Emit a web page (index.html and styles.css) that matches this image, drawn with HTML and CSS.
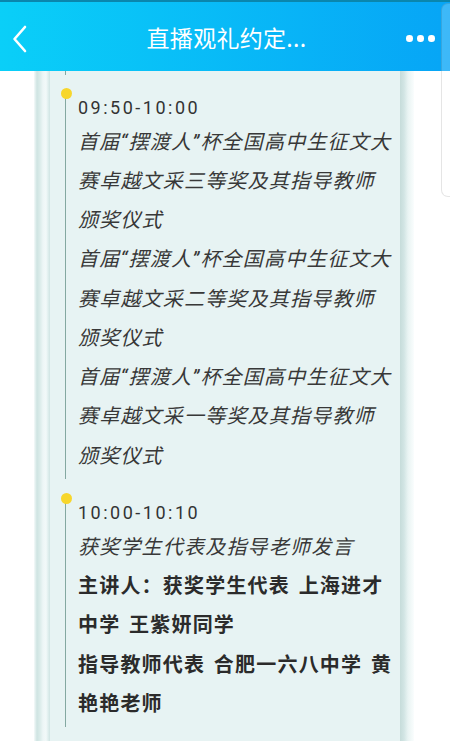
FILE: index.html
```html
<!DOCTYPE html>
<html lang="zh">
<head>
<meta charset="utf-8">
<title>直播观礼约定</title>
<link rel="stylesheet" href="styles.css">
</head>
<body>
<header class="topbar">
  <svg class="back" width="20" height="30" viewBox="0 0 20 30"><path d="M15 3 L4.5 15 L15 27" fill="none" stroke="#fff" stroke-width="2.6" stroke-linecap="round" stroke-linejoin="round"/></svg>
  <h1 class="title">直播观礼约定...</h1>
  <div class="more"><span></span><span></span><span></span></div>
</header>
<div class="side-card"></div>
<main class="page">
  <div class="frame">
    <div class="edge-left"></div>
    <section class="panel">
      <div class="tail"></div>
      <div class="item">
        <span class="dot"></span>
        <div class="time">09:50-10:00</div>
        <p class="it">首届“摆渡人”杯全国高中生征文大赛卓越文采三等奖及其指导教师颁奖仪式</p>
        <p class="it">首届“摆渡人”杯全国高中生征文大赛卓越文采二等奖及其指导教师颁奖仪式</p>
        <p class="it">首届“摆渡人”杯全国高中生征文大赛卓越文采一等奖及其指导教师颁奖仪式</p>
      </div>
      <div class="item">
        <span class="dot"></span>
        <div class="time">10:00-10:10</div>
        <p class="it">获奖学生代表及指导老师发言</p>
        <p class="bd">主讲人：获奖学生代表 上海进才中学 王紫妍同学</p>
        <p class="bd">指导教师代表 合肥一六八中学 黄艳艳老师</p>
      </div>
    </section>
    <div class="edge-right"></div>
  </div>
</main>
</body>
</html>
```
FILE: styles.css
```css
html, body {
  margin: 0;
  padding: 0;
}
body {
  width: 450px;
  height: 741px;
  overflow: hidden;
  background: #fff;
  font-family: Roboto, "Noto Sans CJK SC", sans-serif;
  color: #333;
  position: relative;
}
.topbar {
  height: 69px;
  border-top: 2px solid #0a86ad;
  background: linear-gradient(to right, #0acff8, #07a5f6);
  display: flex;
  align-items: center;
  position: relative;
}
.back {
  position: absolute;
  left: 10px;
  top: 22px;
}
.title {
  margin: 0;
  flex: 1;
  text-align: center;
  font-family: "Noto Sans CJK SC", sans-serif;
  font-weight: 400;
  font-size: 23px;
  color: #fff;
  letter-spacing: 0.3px;
  padding-left: 3px;
}
.more {
  position: absolute;
  left: 406px;
  top: 33px;
  display: flex;
  gap: 4.5px;
}
.more span {
  width: 6.5px;
  height: 6.5px;
  border-radius: 50%;
  background: #fff;
}
.side-card {
  position: absolute;
  left: 441px;
  top: 3px;
  width: 8px;
  height: 192px;
  border: 1px solid rgba(0, 0, 0, 0.1);
  border-right: none;
  border-radius: 7px 0 0 7px;
  background: rgba(255, 255, 255, 0.22);
}
.page {
  padding-left: 34px;
}
.frame {
  display: flex;
  width: 380px;
  height: 670px;
}
.edge-left {
  width: 16px;
  background: linear-gradient(to right, #f5fafa 0, #cfe4e2 3px, #dbecea 6px, #edf6f6 9px, #f2f9f9 12px, #d8eae9 15px, #d0e4e3 16px);
}
.edge-right {
  width: 14px;
  background: linear-gradient(to right, #c6dcda 0, #d2e5e4 4px, #e9f4f3 8px, #fafdfd 14px);
}
.panel {
  flex: 1;
  background: #e7f3f3;
  padding-left: 28px;
  padding-right: 5px;
}
.tail {
  height: 4px;
  margin-left: -13px;
  border-left: 1px solid #84a8a1;
}
.item {
  position: relative;
  margin-top: 17.5px;
  padding-bottom: 3px;
}
.item + .item {
  margin-top: 19px;
}
.item::before {
  content: "";
  position: absolute;
  left: -13px;
  top: 2px;
  bottom: 0;
  width: 1px;
  background: #84a8a1;
}
.dot {
  position: absolute;
  left: -17.5px;
  top: -4.5px;
  width: 11px;
  height: 11px;
  border-radius: 50%;
  background: #f7d62c;
  z-index: 1;
}
.time {
  font-size: 18px;
  line-height: 30px;
  letter-spacing: 2.5px;
  color: #333;
}
.it {
  margin: 0;
  font-family: Roboto, "Noto Sans CJK SC", sans-serif;
  font-style: italic;
  font-size: 20px;
  line-height: 39.25px;
  letter-spacing: 1.2px;
  color: #383838;
}
.bd {
  margin: 0;
  font-family: Roboto, "Noto Sans CJK SC", sans-serif;
  font-weight: 700;
  font-size: 20px;
  line-height: 39.25px;
  letter-spacing: 1.2px;
  word-spacing: 2.5px;
  color: #2b2b2b;
}
```
